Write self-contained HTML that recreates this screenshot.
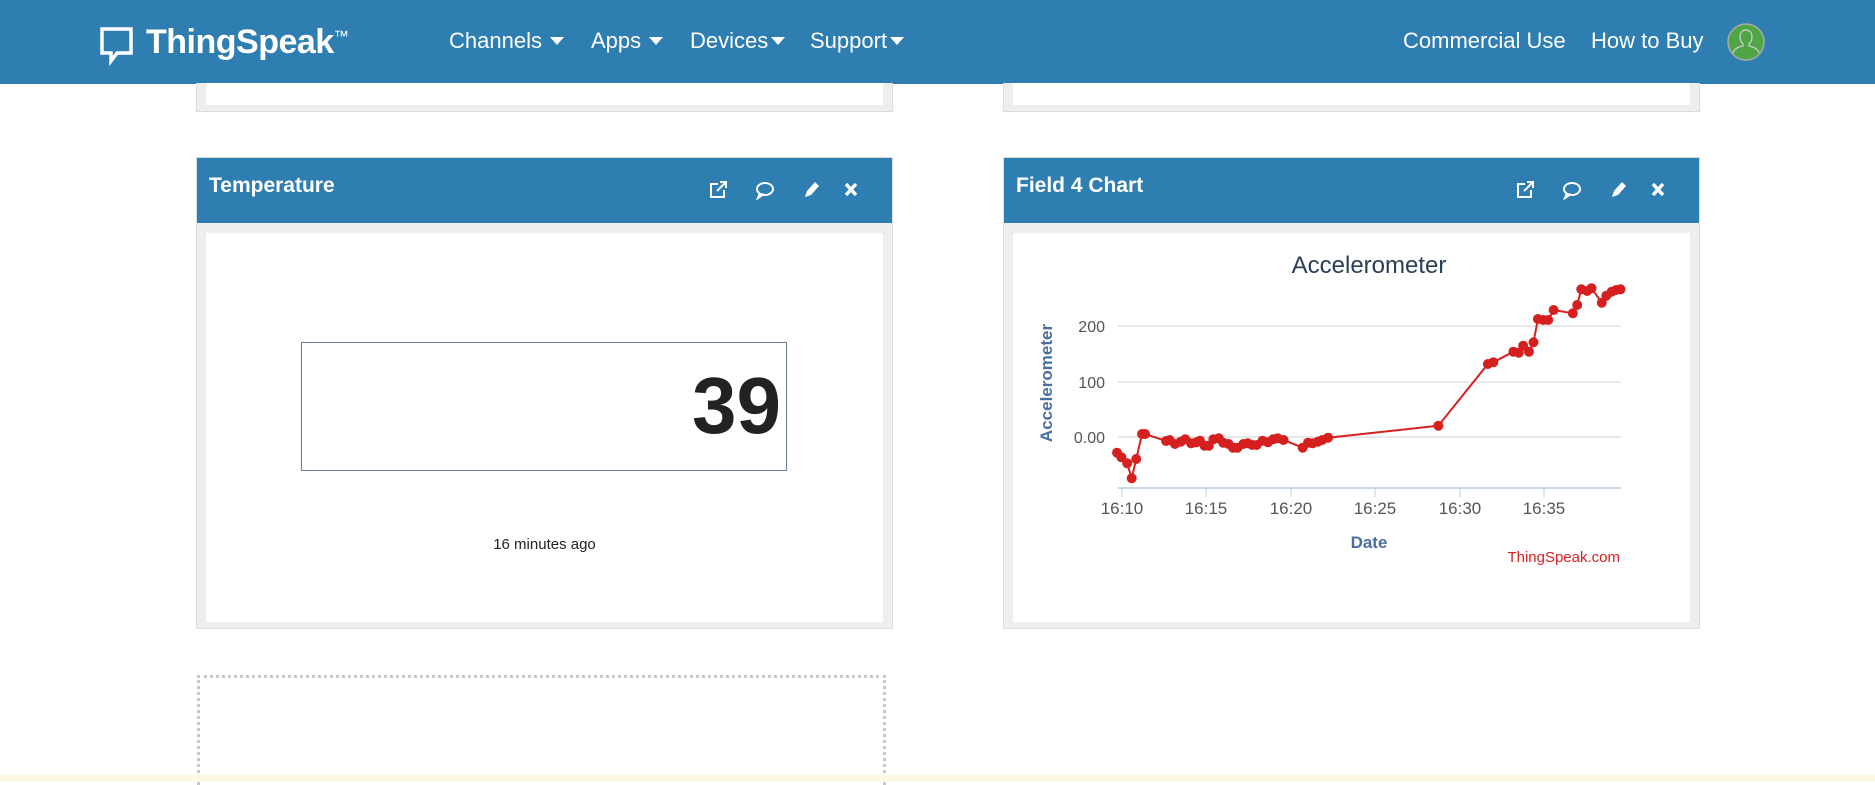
<!DOCTYPE html>
<html><head><meta charset="utf-8"><style>
*{margin:0;padding:0;box-sizing:border-box}
body{width:1875px;height:781px;overflow:hidden;background:#fff;font-family:"Liberation Sans",sans-serif;position:relative}
.abs{position:absolute}
.nav{left:0;top:0;width:1875px;height:84px;background:#2e7eb2;color:#fff}
.nav span{position:absolute;top:28px;font-size:22px;white-space:nowrap}
.caret{display:inline-block;width:0;height:0;border-left:7px solid transparent;border-right:7px solid transparent;border-top:8px solid #fff;vertical-align:middle;margin-left:8px;margin-top:-3px}
.panel{background:#eee;border:1px solid #ddd}
.ph{background:#2e7eb2;color:#fff;font-weight:bold;font-size:21px}
.inner{background:#fff}
</style></head><body>
<div class="abs nav">
 <svg class="abs" style="left:100px;top:27px" width="34" height="40" viewBox="0 0 34 40"><path d="M2 2H31V26H17L11 34V26H2Z" fill="none" stroke="#fff" stroke-width="3.5" stroke-linejoin="miter"/></svg>
 <span style="left:146px;top:23px;font-size:34px;font-weight:bold;letter-spacing:-0.5px">ThingSpeak<sup style="font-size:15px;font-weight:normal;vertical-align:12px">™</sup></span>
 <span style="left:449px">Channels<i class="caret"></i></span>
 <span style="left:591px">Apps<i class="caret"></i></span>
 <span style="left:690px">Devices<i class="caret" style="margin-left:3px"></i></span>
 <span style="left:810px">Support<i class="caret" style="margin-left:3px"></i></span>
 <span style="left:1403px">Commercial Use</span>
 <span style="left:1591px">How to Buy</span>
 <svg class="abs" style="left:1726px;top:22px" width="40" height="40" viewBox="0 0 40 40"><circle cx="20" cy="20" r="18" fill="#4ea645" stroke="#aaa" stroke-width="1.5"/><path d="M20 8c-4 0-6 3-6 7 0 3 1 5 3 7v2c-5 1-9 3-10 7M20 8c4 0 6 3 6 7 0 3-1 5-3 7v2c5 1 9 3 10 7" fill="none" stroke="#ccc" stroke-width="1.3"/></svg>
</div>
<div class="abs panel" style="left:196px;top:83px;width:697px;height:29px;border-top:none"><div class="abs inner" style="left:9px;top:0;width:677px;height:22px"></div></div>
<div class="abs panel" style="left:1003px;top:83px;width:697px;height:29px;border-top:none"><div class="abs inner" style="left:9px;top:0;width:677px;height:22px"></div></div>

<div class="abs panel" style="left:196px;top:157px;width:697px;height:472px">
 <div class="abs ph" style="left:0;top:0;width:695px;height:65px"><span class="abs" style="left:12px;top:16px">Temperature</span>
  <svg class="abs" style="left:510px;top:20px" width="160" height="24" viewBox="0 0 160 24">
   <g fill="none" stroke="#fff" stroke-width="2"><path d="M11 6H4V19H17V12"/><path d="M10 13L18 5M13 4H19V10"/></g>
   <ellipse cx="58" cy="11" rx="8" ry="6" fill="none" stroke="#fff" stroke-width="2"/><path d="M53 15L51 20 57 16" fill="none" stroke="#fff" stroke-width="2"/>
   <path d="M98 19L100 13 108 4 112 8 104 17Z" fill="#fff"/>
   <path d="M139 6L149 17M149 6L139 17" stroke="#fff" stroke-width="3.5"/>
  </svg></div>
 <div class="abs inner" style="left:9px;top:75px;width:677px;height:389px">
  <div class="abs" style="left:95px;top:109px;width:486px;height:129px;border:1px solid #6a7a8a"></div>
  <div class="abs" style="left:95px;top:118px;width:480px;text-align:right;font-size:80px;font-weight:bold;color:#222;line-height:110px">39</div>
  <div class="abs" style="left:0;top:303px;width:677px;text-align:center;font-size:15px;color:#222">16 minutes ago</div>
 </div>
</div>

<div class="abs panel" style="left:1003px;top:157px;width:697px;height:472px">
 <div class="abs ph" style="left:0;top:0;width:695px;height:65px"><span class="abs" style="left:12px;top:16px">Field 4 Chart</span>
  <svg class="abs" style="left:510px;top:20px" width="160" height="24" viewBox="0 0 160 24">
   <g fill="none" stroke="#fff" stroke-width="2"><path d="M11 6H4V19H17V12"/><path d="M10 13L18 5M13 4H19V10"/></g>
   <ellipse cx="58" cy="11" rx="8" ry="6" fill="none" stroke="#fff" stroke-width="2"/><path d="M53 15L51 20 57 16" fill="none" stroke="#fff" stroke-width="2"/>
   <path d="M98 19L100 13 108 4 112 8 104 17Z" fill="#fff"/>
   <path d="M139 6L149 17M149 6L139 17" stroke="#fff" stroke-width="3.5"/>
  </svg></div>
 <div class="abs inner" style="left:9px;top:75px;width:677px;height:389px"></div>
</div>
<svg id="ch" class="abs" style="left:0;top:0" width="1875" height="781">
 <g font-family="Liberation Sans,sans-serif">
 <text x="1369" y="273" text-anchor="middle" font-size="24" fill="#2b3d57">Accelerometer</text>
 <g stroke="#e0e0e0" stroke-width="1.5"><line x1="1118" x2="1621" y1="326" y2="326"/><line x1="1118" x2="1621" y1="382" y2="382"/><line x1="1118" x2="1621" y1="437" y2="437"/></g>
 <line x1="1118" x2="1621" y1="488" y2="488" stroke="#b8cce0" stroke-width="1.5"/>
 <g stroke="#b8cce0"><line x1="1122" x2="1122" y1="488" y2="497"/><line x1="1206" x2="1206" y1="488" y2="497"/><line x1="1291" x2="1291" y1="488" y2="497"/><line x1="1375" x2="1375" y1="488" y2="497"/><line x1="1460" x2="1460" y1="488" y2="497"/><line x1="1544" x2="1544" y1="488" y2="497"/></g>
 <g font-size="16" fill="#555" text-anchor="end"><text x="1105" y="332">200</text><text x="1105" y="388">100</text><text x="1105" y="443">0.00</text></g>
 <g font-size="17" fill="#555" text-anchor="middle"><text x="1122" y="514">16:10</text><text x="1206" y="514">16:15</text><text x="1291" y="514">16:20</text><text x="1375" y="514">16:25</text><text x="1460" y="514">16:30</text><text x="1544" y="514">16:35</text></g>
 <text transform="translate(1052,383) rotate(-90)" text-anchor="middle" font-size="17" font-weight="bold" fill="#4a6fa0">Accelerometer</text>
 <text x="1369" y="548" text-anchor="middle" font-size="17" font-weight="bold" fill="#4a6fa0">Date</text>
 <text x="1620" y="562" text-anchor="end" font-size="15" fill="#d62020">ThingSpeak.com</text>
 </g>
 <g id="data"></g>
</svg>
<script>
var p=[[262,908],[272,922],[285,940],[295,985],[305,927],[318,852],[325,852],[372,873],[380,870],[392,882],[405,875],[415,868],[428,880],[440,877],[448,872],[458,887],[468,887],[478,868],[490,865],[500,878],[512,882],[522,893],[532,893],[545,882],[555,880],[565,885],[575,885],[588,872],[600,877],[612,868],[622,865],[635,870],[678,893],[690,878],[700,880],[712,875],[722,870],[735,863],[982,827],[1093,642],[1105,637],[1150,605],[1162,608],[1172,587],[1185,605],[1195,577],[1205,507],[1217,510],[1228,510],[1240,480],[1283,490],[1293,465],[1302,418],[1315,423],[1325,415],[1348,458],[1358,437],[1370,425],[1380,420],[1390,418]];
var s='',pts=[];p.forEach(function(a){var x=(1000+a[0]/2.24).toFixed(1),y=(150+a[1]/3).toFixed(1);pts.push(x+','+y);s+='<circle cx="'+x+'" cy="'+y+'" r="5" fill="#d62020"/>';});
document.getElementById('data').innerHTML='<polyline points="'+pts.join(' ')+'" fill="none" stroke="#d62020" stroke-width="2"/>'+s;
</script>
<div class="abs" style="left:197px;top:675px;width:689px;height:110px;border:3px dotted #c8c8c8;border-bottom:none"></div>
<div class="abs" style="left:0;top:775px;width:1875px;height:6px;background:#fdf6e3"></div>
</body></html>
